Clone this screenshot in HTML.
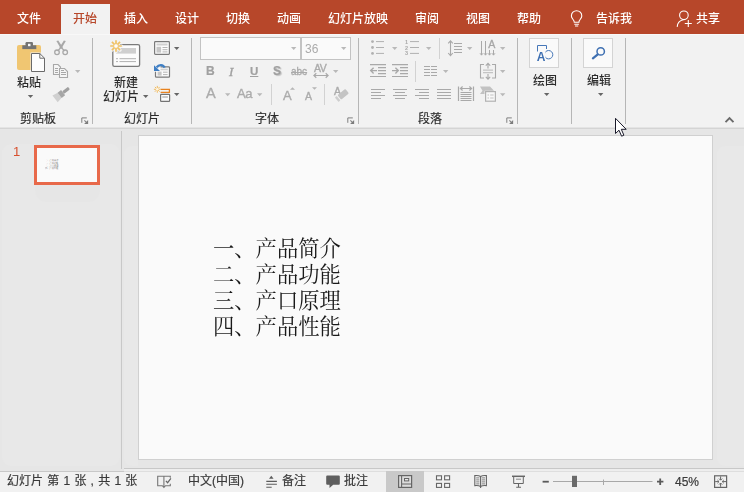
<!DOCTYPE html>
<html lang="zh-CN">
<head>
<meta charset="utf-8">
<title>PowerPoint</title>
<style>
*{box-sizing:border-box;margin:0;padding:0}
html,body{width:744px;height:492px;overflow:hidden;background:#e6e6e6}
body{position:relative;font-family:"Liberation Sans","Noto Sans CJK SC",sans-serif;font-size:12px;color:#262626}
#tabbar{position:absolute;left:0;top:0;width:744px;height:34px;background:#b7472a}
.tab{position:absolute;top:1px;height:34px;line-height:36px;color:#fff;font-size:12px;font-weight:500;white-space:nowrap}
#tab-active{position:absolute;left:61px;top:4px;width:49px;height:30px;background:#f2f2f2}
#ribbon{position:absolute;left:0;top:34px;width:744px;height:95px;background:#f2f2f2;border-bottom:1px solid #d4d4d4;border-top:1px solid #f8f8f8;box-shadow:inset 0 -1px 0 #e4e4e4}
.vsep{position:absolute;top:38px;width:1px;height:86px;background:#b6b6b6}
.ssep{position:absolute;width:1px;background:#d2d2d2}
.glabel{position:absolute;-webkit-text-stroke:0.15px #2b2b2b;top:111px;font-size:12px;line-height:16px;color:#2b2b2b;white-space:nowrap}
.tab,.glabel,.btxt,.gtxt,.st,#slidetext,#thumbnum{will-change:transform}
.btxt{position:absolute;font-weight:500;font-size:12px;line-height:16px;color:#2b2b2b;white-space:nowrap}
.gtxt{position:absolute;color:#ababab;white-space:nowrap;line-height:1;-webkit-text-stroke:0.35px #ababab}
.combo{position:absolute;top:37px;height:23px;background:#fafafa;border:1px solid #c3c3c3}
.bigbox{position:absolute;top:38px;width:30px;height:30px;background:#fafafa;border:1px solid #d4d4d4}
#work{position:absolute;left:0;top:129px;width:744px;height:342px;background:#e6e6e6}
.pn{position:absolute;background:#e8e8e8}
#divider{position:absolute;left:121px;top:131px;width:1px;height:338px;background:#c8c8c8}
#thumb{position:absolute;left:34px;top:145px;width:66px;height:40px;background:#fafafa;border:3px solid #e8694a}
#thumbnum{position:absolute;left:13px;top:144px;font-size:13px;line-height:15px;color:#d7502e}
#thumbtext{position:absolute;left:44.8px;top:158.5px;font-family:"Liberation Serif","Noto Serif CJK SC",serif;font-size:21.3px;line-height:26.15px;color:#444;white-space:nowrap;transform:scale(0.1047);transform-origin:0 0}
#slide{position:absolute;left:138px;top:135px;width:575px;height:325px;background:#fafafa;border:1px solid #d0d0d0}
#slidetext{position:absolute;left:212.5px;top:235.5px;font-family:"Liberation Serif","Noto Serif CJK SC",serif;font-size:21.3px;line-height:26.15px;color:#1a1a1a;white-space:nowrap}
#status{position:absolute;left:0;top:471px;width:744px;height:21px;background:#f1f1f1;border-top:1px solid #dedede}
#stl{position:absolute;left:0;top:471px;width:124px;height:1px;background:#c8c8c8}
#wbot{position:absolute;left:124px;top:468px;width:620px;height:3px;background:#eeeeee;border-top:1px solid #c8c8c8}
#viewsel{position:absolute;left:386px;top:471px;width:38px;height:21px;background:#c9c9c9}
.st{position:absolute;-webkit-text-stroke:0.2px #3a3a3a;top:470px;height:22px;line-height:22px;font-size:12px;color:#3a3a3a;white-space:nowrap}
#icons{position:absolute;left:0;top:0;width:744px;height:492px}
</style>
</head>
<body>
<div id="tabbar">
  <div id="tab-active"></div>
  <div class="tab" style="left:17px">文件</div>
  <div class="tab" style="left:73px;color:#b7472a">开始</div>
  <div class="tab" style="left:124px">插入</div>
  <div class="tab" style="left:175px">设计</div>
  <div class="tab" style="left:226px">切换</div>
  <div class="tab" style="left:277px">动画</div>
  <div class="tab" style="left:328px">幻灯片放映</div>
  <div class="tab" style="left:415px">审阅</div>
  <div class="tab" style="left:466px">视图</div>
  <div class="tab" style="left:517px">帮助</div>
  <div class="tab" style="left:596px">告诉我</div>
  <div class="tab" style="left:696px">共享</div>
</div>
<div id="ribbon"></div>
<div class="vsep" style="left:92px"></div>
<div class="vsep" style="left:191px"></div>
<div class="vsep" style="left:358px"></div>
<div class="vsep" style="left:517px"></div>
<div class="vsep" style="left:571px"></div>
<div class="vsep" style="left:625px"></div>
<div class="ssep" style="left:271px;top:84px;height:21px"></div>
<div class="ssep" style="left:324px;top:84px;height:21px"></div>
<div class="ssep" style="left:439px;top:38px;height:21px"></div>
<div class="ssep" style="left:415px;top:61px;height:21px"></div>
<div class="glabel" style="left:20px">剪贴板</div>
<div class="glabel" style="left:124px">幻灯片</div>
<div class="glabel" style="left:255px">字体</div>
<div class="glabel" style="left:418px">段落</div>
<div class="btxt" style="left:17px;top:75px">粘贴</div>
<div class="btxt" style="left:114px;top:75px">新建</div>
<div class="btxt" style="left:103px;top:89px">幻灯片</div>
<div class="btxt" style="left:533px;top:73px">绘图</div>
<div class="btxt" style="left:587px;top:73px">编辑</div>
<div class="combo" style="left:200px;width:101px"></div>
<div class="combo" style="left:301px;width:50px"></div>
<div class="gtxt" style="left:304.6px;top:43px;font-size:12px;line-height:13px;-webkit-text-stroke:0">36</div>
<div class="gtxt" style="left:206px;top:65px;font-size:12px;line-height:13px;font-weight:bold;color:#a0a0a0;-webkit-text-stroke:0.2px #a0a0a0">B</div>
<div class="gtxt" style="left:229.3px;top:64.5px;font-size:13px;line-height:13px;font-style:italic;font-family:'Liberation Serif',serif;color:#a0a0a0;-webkit-text-stroke:0.35px #a0a0a0">I</div>
<div class="gtxt" style="left:250px;top:65.4px;font-size:11.5px;line-height:13px;font-weight:bold;color:#a0a0a0;-webkit-text-stroke:0.2px #a0a0a0;text-decoration:underline">U</div>
<div class="gtxt" style="left:273px;top:65px;font-size:12px;line-height:13px;font-weight:bold;color:#a0a0a0;-webkit-text-stroke:0.2px #a0a0a0;text-shadow:1.2px 1.2px 1px #c0c0c0">S</div>
<div class="gtxt" style="left:291px;top:66px;font-size:10px;line-height:12px;text-decoration:line-through">abc</div>
<div class="gtxt" style="left:313.8px;top:63px;font-size:10.5px;line-height:11px;letter-spacing:-0.4px">AV</div>
<div class="gtxt" style="left:206px;top:86px;font-size:14.5px;line-height:15px">A</div>
<div class="gtxt" style="left:237px;top:87px;font-size:13px;line-height:14px;letter-spacing:-0.3px">Aa</div>
<div class="gtxt" style="left:282.7px;top:88.6px;font-size:13px;line-height:13px">A</div>
<div class="gtxt" style="left:305px;top:90.5px;font-size:10.5px;line-height:11px">A</div>
<div class="gtxt" style="left:334px;top:86px;font-size:10.5px;line-height:11px">A</div>
<div class="bigbox" style="left:529px"></div>
<div class="bigbox" style="left:583px"></div>
<div id="work"></div>
<div class="pn" style="left:2px;top:144px;width:118px;height:322px;border-radius:9px"></div>
<div class="pn" style="left:35px;top:144px;width:65px;height:58px;background:#e6e6e6;border-radius:0 0 12px 12px"></div>
<div class="pn" style="left:124px;top:146px;width:14px;height:320px;border-radius:8px 0 0 8px"></div>
<div class="pn" style="left:717px;top:146px;width:27px;height:320px;border-radius:8px 0 0 8px"></div>
<div id="divider"></div>
<div id="thumb"></div>
<div id="thumbnum">1</div>
<div id="thumbtext">一、产品简介<br>二、产品功能<br>三、产口原理<br>四、产品性能</div>
<div id="slide"></div>
<div id="slidetext">一、产品简介<br>二、产品功能<br>三、产口原理<br>四、产品性能</div>
<div id="wbot"></div>
<div id="status"></div>
<div id="stl"></div>
<div id="viewsel"></div>
<div class="st" style="left:7px;word-spacing:0.9px">幻灯片 第 1 张 , 共 1 张</div>
<div class="st" style="left:188px">中文(中国)</div>
<div class="st" style="left:282px">备注</div>
<div class="st" style="left:344px">批注</div>
<div class="st" style="left:675px;top:471px">45%</div>
<svg id="icons" viewBox="0 0 744 492">
<defs>
<path id="dd" d="M0,0h5.4l-2.7,3z"/>
<g id="launch"><path d="M0.8,5.8V0.9H5.8" fill="none" stroke="#808080" stroke-width="1"/><path d="M3.4,3.4L5.6,5.6" fill="none" stroke="#808080" stroke-width="1.1"/><path d="M7.1,3.1V7.1H3.1z" fill="#7c7c7c"/></g>
</defs>
<!-- dropdown arrows: dark -->
<g fill="#666">
<use href="#dd" x="27.8" y="95"/><use href="#dd" x="174" y="47"/><use href="#dd" x="143" y="95"/><use href="#dd" x="174" y="93"/>
<use href="#dd" x="544" y="93"/><use href="#dd" x="598" y="93"/>
</g>
<g fill="#b9b9b9">
<use href="#dd" x="75" y="70"/><use href="#dd" x="291" y="47"/><use href="#dd" x="341" y="47"/><use href="#dd" x="333" y="70"/>
<use href="#dd" x="225" y="93.3"/><use href="#dd" x="257" y="93.3"/><use href="#dd" x="392" y="47"/><use href="#dd" x="426" y="47"/>
<use href="#dd" x="443" y="70"/><use href="#dd" x="467" y="47"/><use href="#dd" x="500" y="47"/><use href="#dd" x="500" y="70"/><use href="#dd" x="500" y="93.3"/>
</g>
<use href="#launch" x="81" y="117"/><use href="#launch" x="347" y="117"/><use href="#launch" x="506" y="117"/>
<!-- paste -->
<rect x="17" y="45" width="24" height="25" rx="2" fill="#f0c672"/>
<rect x="25.5" y="42" width="7.5" height="5" rx="1.2" fill="#737373"/>
<rect x="22.3" y="45.3" width="14" height="3.8" fill="#737373"/>
<rect x="28" y="43.8" width="2.5" height="2.4" fill="#f6f6f6"/>
<path d="M30.5,52.5h10l5,5v15h-15z" fill="#f2f2f2"/>
<path d="M31.5,53.5h8.3l4.7,4.7v13.3h-13z" fill="#fdfdfd" stroke="#6a6a6a" stroke-width="1"/>
<path d="M39.8,53.5v4.7h4.7" fill="none" stroke="#6a6a6a" stroke-width="1"/>
<!-- scissors -->
<g fill="#a8a8a8" stroke="none">
<path d="M56.4,41l1.9,-0.5l4.5,7.1l-2,1.2z"/><path d="M65.8,41l-1.9,-0.5l-4.5,7.1l2,1.2z"/>
</g>
<g fill="none" stroke="#a8a8a8" stroke-width="1.3" stroke-linecap="round">
<path d="M61.8,48l2.4,2.6M60.4,48l-2.4,2.6"/>
<circle cx="57" cy="52.3" r="2.3"/><circle cx="65.2" cy="52.3" r="2.3"/>
</g>
<!-- copy -->
<g fill="#f6f6f6" stroke="#a8a8a8" stroke-width="1.1">
<path d="M53.5,64.5h4.5l2.5,2.5v7.5h-7z"/>
<path d="M59.5,68.5h5l3,3v6h-8z"/>
</g>
<g stroke="#a8a8a8" stroke-width="1" fill="none">
<path d="M55,68.5h3M55,70.5h3M55,72.5h3M61,72.5h5M61,74.5h5M61,70.5h3"/>
</g>
<!-- format painter -->
<g transform="translate(61.7,93.7) rotate(-38)">
<path d="M-8.4,-4.3L-2.6,-3.2V3.2L-8.4,4.3z" fill="#d0d0d0"/>
<rect x="-2.6" y="-3.3" width="4.4" height="6.6" fill="#a6a6a6"/>
<rect x="1.8" y="-1.6" width="7.4" height="3.2" rx="1" fill="#a0a0a0"/>
</g>
<!-- new slide -->
<rect x="112.8" y="44.6" width="26.8" height="21.8" rx="1.6" fill="#fcfcfc" stroke="#7a7a7a" stroke-width="1.3"/>
<rect x="116" y="48" width="20" height="5.6" fill="#cfcfcf"/>
<path d="M116,58.7h2M119.5,58.7h16.5M116,61.6h2M119.5,61.6h16.5" stroke="#b0b0b0" stroke-width="1"/>
<g stroke="#f2f2f2" stroke-width="3.2" stroke-linecap="round"><path d="M116,40.3v11.4M110.2,46h11.6M111.9,41.9l8.2,8.2M120.1,41.9l-8.2,8.2"/></g>
<g stroke="#f0c264" stroke-width="1.7"><path d="M116,40.2v11.6M110.2,46h11.6M111.9,41.9l8.2,8.2M120.1,41.9l-8.2,8.2"/></g>
<circle cx="116" cy="46" r="2.3" fill="#fdfdfd" stroke="#f0c264" stroke-width="0.8"/>
<!-- layout -->
<rect x="154.6" y="41.6" width="14.8" height="12.8" rx="0.8" fill="#fcfcfc" stroke="#7a7a7a" stroke-width="1.2"/>
<rect x="156.5" y="43.5" width="11" height="2" fill="#d0d0d0"/>
<rect x="156.5" y="46.8" width="4.6" height="5.8" fill="#c6c6c6"/>
<path d="M162.5,47.5h5M162.5,49.7h5M162.5,51.9h5" stroke="#b5b5b5" stroke-width="1"/>
<!-- reset -->
<path d="M160.5,66.8h8.2a0.8,0.8 0 0 1 0.8,0.8v8.8a0.8,0.8 0 0 1 -0.8,0.8h-12.4a0.8,0.8 0 0 1 -0.8,-0.8v-4.6" fill="#fcfcfc" stroke="#7a7a7a" stroke-width="1.2"/>
<rect x="160.5" y="68.6" width="7.3" height="1.7" fill="#d0d0d0"/>
<rect x="157.6" y="71.6" width="4" height="4" fill="#c6c6c6"/>
<path d="M163,72.2h4.6M163,74.6h4.6" stroke="#b5b5b5" stroke-width="1"/>
<path d="M164.6,67.6c-1.2,-3 -5.6,-3.6 -8,-0.2" fill="none" stroke="#3f7fc4" stroke-width="2.3"/>
<path d="M154,65.2v5.8h6z" fill="#3f7fc4"/>
<!-- section -->
<rect x="160.6" y="94.4" width="9" height="7" rx="0.6" fill="#fcfcfc" stroke="#747474" stroke-width="1.2"/>
<path d="M162.3,97h5.6" stroke="#c4c4c4" stroke-width="1.8"/>
<path d="M160.6,89.4h8.8v2.9h-8.8" fill="none" stroke="#e8821f" stroke-width="1.3"/>
<g stroke="#f0b44e" stroke-width="0.9"><path d="M157.3,85.9v6.8M153.9,89.3h6.8M154.9,86.9l4.8,4.8M159.7,86.9l-4.8,4.8"/></g>
<circle cx="157.3" cy="89.3" r="1.3" fill="#fdf6e6"/>
<!-- AV arrow -->
<path d="M314,75.5h14M316.3,73.2l-2.4,2.3l2.4,2.3M325.7,73.2l2.4,2.3l-2.4,2.3" fill="none" stroke="#a9a9a9" stroke-width="1.2"/>
<!-- grow/shrink triangles -->
<path d="M290,89.8l2.5,-2.6l2.5,2.6z" fill="#b5b5b5"/>
<path d="M312,87.2h5l-2.5,2.6z" fill="#b5b5b5"/>
<!-- eraser -->
<g transform="translate(342,95.3) rotate(-40)">
<rect x="-3.4" y="-2.9" width="10" height="5.8" rx="1" fill="#c4c4c4"/>
<rect x="-6.9" y="-2.9" width="2.4" height="5.8" rx="0.6" fill="#cecece"/>
</g>
<!-- bullets -->
<g fill="#b0b0b0"><circle cx="372.5" cy="41.6" r="1.4"/><circle cx="372.5" cy="47.5" r="1.4"/><circle cx="372.5" cy="53.4" r="1.4"/></g>
<path d="M376,41.6h8M376,47.5h8M376,53.4h8" stroke="#b0b0b0" stroke-width="1"/>
<!-- numbering -->
<path d="M410,41.6h9M410,47.5h9M410,53.4h9" stroke="#b0b0b0" stroke-width="1"/>
<g font-family="Liberation Sans, sans-serif" font-size="5.5" font-weight="bold" fill="#a8a8a8"><text x="405" y="43.6">1</text><text x="405" y="49.5">2</text><text x="405" y="55.4">3</text></g>
<!-- decrease indent -->
<g stroke="#a9a9a9" stroke-width="1.2" fill="none">
<path d="M370,64.7h16M370,76.5h16M378,67.6h8M378,70.6h8M378,73.6h8"/>
<path d="M370.6,70.6h6.4M373.6,67.8l-2.9,2.8l2.9,2.8" stroke-width="1.4"/>
<!-- increase indent -->
<path d="M392,64.7h16M392,76.5h16M400,67.6h8M400,70.6h8M400,73.6h8"/>
<path d="M392,70.6h6.4M395.4,67.8l2.9,2.8l-2.9,2.8" stroke-width="1.4"/>
<!-- columns -->
<path d="M424,66.5h6M431,66.5h6M424,69.5h6M431,69.5h6M424,72.5h6M431,72.5h6M424,75.5h6M431,75.5h6"/>
<!-- align -->
<path d="M371,89.5h14M371,92.5h10M371,95.5h14M371,98.5h10"/>
<path d="M393,89.5h14M395,92.5h10M393,95.5h14M395,98.5h10"/>
<path d="M415,89.5h14M419,92.5h10M415,95.5h14M419,98.5h10"/>
<path d="M437,89.5h14M437,92.5h14M437,95.5h14M437,98.5h14"/>
<!-- line spacing -->
<path d="M454,43.5h8M454,46.5h8M454,49.5h8M454,52.5h8"/>
<path d="M450.5,41v14.4M448.2,43.4l2.3,-2.6l2.3,2.6M448.2,53l2.3,2.6l2.3,-2.6" stroke-width="1.1"/>
<!-- text direction -->
<path d="M481.5,41v14M485.5,41v14M489.5,50v5M493.5,50v5" stroke-width="1"/>
<path d="M480,53.2l1.5,2l1.5,-2M484,53.2l1.5,2l1.5,-2M488,53.2l1.5,2l1.5,-2M492,53.2l1.5,2l1.5,-2" stroke-width="0.9"/>
<!-- align text -->
<path d="M484,64.5h-3.5v13.5h3.5M492,64.5h3.5v13.5h-3.5" stroke-width="1.1"/>
<path d="M483,70.2h10M483,72.6h10" stroke="#c4c4c4"/>
<path d="M488,63.4v5M485.8,65.6l2.2,-2.3l2.2,2.3M488,74v5M485.8,76.8l2.2,2.3l2.2,-2.3" stroke-width="1.1"/>
<!-- distributed -->
<path d="M458.5,86.5v14.5M473.5,86.5v14.5"/>
<path d="M460.5,88.5h11M462.6,86.5l-2.2,2l2.2,2M469.4,86.5l2.2,2l-2.2,2"/>
<path d="M460.5,92.5h11M460.5,94.5h11M460.5,96.5h11M460.5,98.5h11M460.5,100.5h11"/>
</g>
<g font-family="Liberation Sans, sans-serif" font-size="10.6" fill="#a6a6a6" stroke="#a6a6a6" stroke-width="0.3"><text x="488.2" y="47.9">A</text></g>
<!-- smartart -->
<path d="M480,86.4h10l4,4.3l-3,0h-6.5v3.2h-4.5l2.5,-3.2z" fill="#c2c2c2"/>
<rect x="485.6" y="91.6" width="9.8" height="9.6" fill="#f8f8f8" stroke="#b2b2b2" stroke-width="1.2"/>
<path d="M487.5,95h1.5M490.2,95h3.4M487.5,98h1.5M490.2,98h3.4" stroke="#c2c2c2" stroke-width="1"/>

<!-- drawing icon -->
<path d="M537.5,54v-8.5h9v3.5" fill="none" stroke="#4677b8" stroke-width="1"/>
<circle cx="548.6" cy="54.7" r="4.2" fill="#fafafa" stroke="#4677b8" stroke-width="1"/>
<rect x="536.5" y="51.5" width="9" height="9.6" fill="#fafafa"/>
<text x="536.7" y="60.7" font-family="Liberation Sans, sans-serif" font-weight="bold" font-size="12" fill="#3f70b2">A</text>
<!-- magnifier -->
<circle cx="600.7" cy="51.4" r="3.7" fill="none" stroke="#3f70b2" stroke-width="1.5"/>
<path d="M597.8,54.4l-4.9,4" stroke="#3f70b2" stroke-width="2.2" stroke-linecap="round"/>
<!-- chevron collapse -->
<path d="M725.5,122.2l4,-4l4,4" fill="none" stroke="#6a6a6a" stroke-width="1.9"/>
<!-- bulb -->
<g fill="none" stroke="#fff" stroke-width="1.1">
<path d="M574.3,22.3c0,-2.6 -2.9,-3.6 -2.9,-6.4a5.2,5.2 0 0 1 10.4,0c0,2.8 -2.9,3.8 -2.9,6.4z"/>
<path d="M574.3,24.2h4.6M575,26h3.2"/>
</g>
<!-- share person -->
<g fill="none" stroke="#fff" stroke-width="1.1">
<circle cx="683.9" cy="15.3" r="4.3"/>
<path d="M677.2,26.9c0.2,-3.8 2.8,-6.6 6.2,-7.2"/>
<path d="M684.8,23.5h7M688.3,20v7"/>
</g>
<!-- cursor -->
<path d="M615.5,118.3v15.2l3.5,-3.3l2.6,6l2.3,-1l-2.6,-5.9h4.9z" fill="#fff" stroke="#1a1a2a" stroke-width="1" stroke-linejoin="miter"/>

<!-- status: spellcheck book -->
<g fill="none" stroke="#777" stroke-width="1.1">
<path d="M163.9,476.3h-6.2v9.4h4.6l1.6,1.7l1.6,-1.7h4.8v-2M163.9,476.3v10.6M163.9,476.3h6.4v1.4"/>
<path d="M165.9,480.8l1.7,1.9l3.3,-4.4" stroke="#666" stroke-width="1.2"/>
</g>
<!-- notes -->
<path d="M269,478.7l2.3,-2.9l2.3,2.9z" fill="#5c5c5c"/>
<path d="M266.3,481.4h10.6M266.3,484.3h10.6M266.3,487.2h5.4" stroke="#5c5c5c" stroke-width="1.1"/>
<!-- comments -->
<path d="M327.2,475.6h11.6a1,1 0 0 1 1,1v7.2a1,1 0 0 1 -1,1h-5.6l-3.7,3.3v-3.3h-2.3a1,1 0 0 1 -1,-1v-7.2a1,1 0 0 1 1,-1z" fill="#5e5e5e"/>
<!-- normal view -->
<rect x="398.6" y="475.6" width="13" height="11.8" fill="#dcdcdc" stroke="#666" stroke-width="1.2"/>
<path d="M401.6,475.6v11.8M401.6,484h10" stroke="#666" stroke-width="1.1"/>
<rect x="404.5" y="478.5" width="4.2" height="2.4" fill="#e8e8e8" stroke="#666" stroke-width="1"/>
<!-- sorter -->
<g fill="#f4f4f4" stroke="#666" stroke-width="1.1">
<rect x="436.5" y="475.8" width="5" height="4"/><rect x="444.6" y="475.8" width="5" height="4"/>
<rect x="436.5" y="483.4" width="5" height="4"/><rect x="444.6" y="483.4" width="5" height="4"/>
</g>
<!-- reading view -->
<g fill="none" stroke="#646464" stroke-width="1.1">
<path d="M480.6,476.4c-1.4,-0.8 -3.8,-1 -5.8,-0.8v10c2,-0.2 4.4,0 5.8,0.8c1.4,-0.8 3.8,-1 5.8,-0.8v-10c-2,-0.2 -4.4,0 -5.8,0.8zM480.6,476.4v11.6"/>
<path d="M476.2,477.9h3.2M476.2,479.9h3.2M476.2,481.9h3.2M476.2,483.9h3.2M481.8,477.9h3.2M481.8,479.9h3.2M481.8,481.9h3.2M481.8,483.9h3.2" stroke-width="0.9" stroke="#747474"/>
</g>
<!-- slideshow -->
<g fill="none" stroke="#666">
<path d="M512,476.3h13" stroke-width="1.5"/>
<path d="M513.7,477v6.5h9.6v-6.5" stroke-width="1"/>
<path d="M516,479.2h5" stroke-width="1" stroke="#888"/>
<path d="M518.5,483.5v3.4M516.2,487.2h4.8" stroke-width="1.1"/>
</g>
<!-- zoom slider -->
<path d="M542.6,481.7h6.2" stroke="#5a5a5a" stroke-width="1.8"/>
<path d="M553,481.5h99.5" stroke="#a8a8a8" stroke-width="1"/>
<path d="M603.5,479.5v5.5" stroke="#a8a8a8" stroke-width="1"/>
<rect x="572" y="475.8" width="5" height="11.2" fill="#6a6a6a"/>
<path d="M657,481.7h6.4M660.2,478.5v6.4" stroke="#5a5a5a" stroke-width="1.8"/>
<!-- fit -->
<rect x="714.6" y="475.8" width="12" height="11.6" fill="none" stroke="#666" stroke-width="1.2"/>
<g fill="none" stroke="#666" stroke-width="1">
<path d="M720.6,476.4v3.6M719,478.6l1.6,1.6l1.6,-1.6M720.6,486.8v-3.6M719,484.6l1.6,-1.6l1.6,1.6M715.2,481.6h3.6M717.4,480l1.6,1.6l-1.6,1.6M726,481.6h-3.6M723.8,480l-1.6,1.6l1.6,1.6"/>
</g>

<!--ICONS6-->
</svg>
</body>
</html>
